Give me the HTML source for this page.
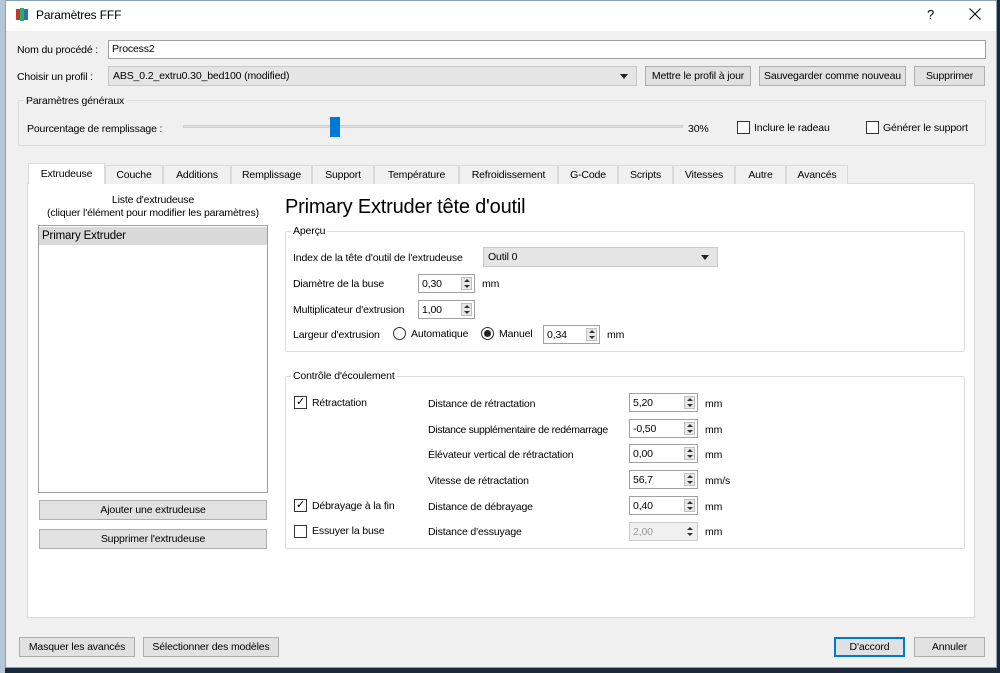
<!DOCTYPE html>
<html><head><meta charset="utf-8"><style>
*{box-sizing:border-box;margin:0;padding:0}
body{width:1000px;height:673px;position:relative;overflow:hidden;background:#1b2a3a;font-family:"Liberation Sans",sans-serif;font-size:10.5px;letter-spacing:-0.15px;color:#000}
.a{position:absolute;white-space:nowrap}
.win{position:absolute;left:5px;top:0;width:992px;height:668px;background:#f0f0f0;border:1px solid #8aa2b8}
.btn{position:absolute;background:#e1e1e1;border:1px solid #adadad;text-align:center;line-height:18px;height:20px;white-space:nowrap;overflow:hidden}
.inp{position:absolute;background:#fff;border:1px solid #a0a0a0;height:19px;line-height:17px;padding-left:3px}
.combo{position:absolute;background:#e5e5e5;border:1px solid #c8c8c8;height:20px;line-height:18px;padding-left:4px}
.combo:after{content:"";position:absolute;right:8px;top:7px;border-left:4px solid transparent;border-right:4px solid transparent;border-top:5px solid #222}
.grp{position:absolute;border:1px solid #dcdcdc;border-radius:2px}
.gt{position:absolute;background:#f0f0f0;padding:0 2px;line-height:12px}
.cb{position:absolute;width:13px;height:13px;border:1px solid #333;background:#fff}
.spin{position:absolute;background:#fff;border:1px solid #a0a0a0;height:19px;line-height:18px;padding-left:3px}
.spin i{position:absolute;right:2px;top:2px;width:11px;height:13px;background:#e8e8e8;border:1px solid #c0c0c0}
.spin i:before{content:"";position:absolute;left:2px;top:1px;border-left:3px solid transparent;border-right:3px solid transparent;border-bottom:3px solid #333}
.spin i:after{content:"";position:absolute;left:2px;top:7px;border-left:3px solid transparent;border-right:3px solid transparent;border-top:3px solid #333}
.tab{position:absolute;top:165px;height:19px;border:1px solid #d9d9d9;border-bottom:none;background:#f0f0f0;text-align:center;line-height:19px}
</style></head><body>
<div style="position:absolute;left:0;top:0;width:5px;height:673px;background:#b5c6d6"></div>
<div class="win">
<div style="position:absolute;left:0;top:0;width:990px;height:30px;background:#fff"></div>
</div>
<svg class="a" style="left:16px;top:8px" width="12" height="13"><rect x="0" y="1" width="4" height="11" fill="#c0392b"/><rect x="4" y="0" width="4" height="13" fill="#27ae60"/><rect x="8" y="1" width="4" height="11" fill="#2c6db5"/></svg>
<div class="a" style="left:36px;top:8px;font-size:12px">Paramètres FFF</div>
<div class="a" style="left:927px;top:7px;font-size:13px">?</div>
<svg class="a" style="left:969px;top:8px" width="12" height="12"><path d="M0.5 0.5L11.5 11.5M11.5 0.5L0.5 11.5" stroke="#111" stroke-width="1.2"/></svg>

<div class="a" style="left:17px;top:44px">Nom du procédé :</div>
<div class="inp" style="left:108px;top:40px;width:878px">Process2</div>
<div class="a" style="left:17px;top:71px">Choisir un profil :</div>
<div class="combo" style="left:108px;top:66px;width:529px">ABS_0.2_extru0.30_bed100 (modified)</div>
<div class="btn" style="left:645px;top:66px;width:106px">Mettre le profil à jour</div>
<div class="btn" style="left:759px;top:66px;width:147px">Sauvegarder comme nouveau</div>
<div class="btn" style="left:914px;top:66px;width:71px">Supprimer</div>

<div class="grp" style="left:18px;top:100px;width:968px;height:46px"></div>
<div class="gt" style="left:24px;top:95px">Paramètres généraux</div>
<div class="a" style="left:27px;top:123px">Pourcentage de remplissage :</div>
<div class="a" style="left:183px;top:125px;width:500px;height:3px;background:#ddd;border:1px solid #d0d0d0"></div>
<div class="a" style="left:330px;top:117px;width:10px;height:20px;background:#0078d7"></div>
<div class="a" style="left:688px;top:123px">30%</div>
<div class="cb" style="left:737px;top:121px"></div><div class="a" style="left:754px;top:122px">Inclure le radeau</div>
<div class="cb" style="left:866px;top:121px"></div><div class="a" style="left:883px;top:122px">Générer le support</div>

<div class="a" style="left:27px;top:183px;width:948px;height:435px;background:#fff;border:1px solid #d9d9d9"></div>
<div class="tab" style="left:28px;top:163px;width:77px;height:21px;background:#fff;line-height:20px">Extrudeuse</div>
<div class="tab" style="left:105px;width:58px">Couche</div>
<div class="tab" style="left:163px;width:68px">Additions</div>
<div class="tab" style="left:231px;width:81px">Remplissage</div>
<div class="tab" style="left:312px;width:62px">Support</div>
<div class="tab" style="left:374px;width:85px">Température</div>
<div class="tab" style="left:459px;width:99px">Refroidissement</div>
<div class="tab" style="left:558px;width:60px">G-Code</div>
<div class="tab" style="left:618px;width:55px">Scripts</div>
<div class="tab" style="left:673px;width:62px">Vitesses</div>
<div class="tab" style="left:735px;width:51px">Autre</div>
<div class="tab" style="left:786px;width:62px">Avancés</div>

<div class="a" style="left:38px;top:194px;width:230px;text-align:center;line-height:13px">Liste d'extrudeuse<br>(cliquer l'élément pour modifier les paramètres)</div>
<div class="a" style="left:38px;top:225px;width:230px;height:268px;border:1px solid #a0a0a0;background:#fff"></div>
<div class="a" style="left:39px;top:227px;width:228px;height:18px;background:#d9d9d9;padding-left:3px;line-height:18px;font-size:11.5px">Primary Extruder</div>
<div class="btn" style="left:39px;top:500px;width:228px">Ajouter une extrudeuse</div>
<div class="btn" style="left:39px;top:529px;width:228px">Supprimer l'extrudeuse</div>

<div class="a" style="left:285px;top:196px;font-size:20px;letter-spacing:-0.2px">Primary Extruder tête d'outil</div>

<div class="grp" style="left:285px;top:231px;width:680px;height:121px"></div>
<div class="gt" style="left:291px;top:225px;background:#fff">Aperçu</div>
<div class="a" style="left:293px;top:252px">Index de la tête d'outil de l'extrudeuse</div>
<div class="combo" style="left:483px;top:247px;width:235px">Outil 0</div>
<div class="a" style="left:293px;top:278px">Diamètre de la buse</div>
<div class="spin" style="left:418px;top:274px;width:57px">0,30<i></i></div>
<div class="a" style="left:482px;top:278px">mm</div>
<div class="a" style="left:293px;top:304px">Multiplicateur d'extrusion</div>
<div class="spin" style="left:418px;top:300px;width:57px">1,00<i></i></div>
<div class="a" style="left:293px;top:329px">Largeur d'extrusion</div>
<div class="a" style="left:393px;top:327px;width:13px;height:13px;border:1px solid #333;border-radius:50%"></div>
<div class="a" style="left:411px;top:328px">Automatique</div>
<div class="a" style="left:481px;top:327px;width:13px;height:13px;border:1px solid #333;border-radius:50%"><div style="margin:2px;width:7px;height:7px;border-radius:50%;background:#222"></div></div>
<div class="a" style="left:499px;top:328px">Manuel</div>
<div class="spin" style="left:543px;top:325px;width:57px">0,34<i></i></div>
<div class="a" style="left:607px;top:329px">mm</div>

<div class="grp" style="left:285px;top:376px;width:680px;height:173px"></div>
<div class="gt" style="left:291px;top:370px;background:#fff">Contrôle d'écoulement</div>
<div class="cb" style="left:294px;top:396px;font-size:11px;line-height:10px;text-align:center">✓</div><div class="a" style="left:312px;top:397px">Rétractation</div>
<div class="cb" style="left:294px;top:499px;font-size:11px;line-height:10px;text-align:center">✓</div><div class="a" style="left:312px;top:500px">Débrayage à la fin</div>
<div class="cb" style="left:294px;top:525px"></div><div class="a" style="left:312px;top:525px">Essuyer la buse</div>

<div class="a" style="left:428px;top:398px">Distance de rétractation</div>
<div class="spin" style="left:629px;top:393px;width:69px">5,20<i></i></div><div class="a" style="left:705px;top:398px">mm</div>
<div class="a" style="left:428px;top:424px;letter-spacing:-0.35px">Distance supplémentaire de redémarrage</div>
<div class="spin" style="left:629px;top:419px;width:69px">-0,50<i></i></div><div class="a" style="left:705px;top:424px">mm</div>
<div class="a" style="left:428px;top:449px">Élévateur vertical de rétractation</div>
<div class="spin" style="left:629px;top:444px;width:69px">0,00<i></i></div><div class="a" style="left:705px;top:449px">mm</div>
<div class="a" style="left:428px;top:475px">Vitesse de rétractation</div>
<div class="spin" style="left:629px;top:470px;width:69px">56,7<i></i></div><div class="a" style="left:705px;top:475px">mm/s</div>
<div class="a" style="left:428px;top:501px">Distance de débrayage</div>
<div class="spin" style="left:629px;top:496px;width:69px">0,40<i></i></div><div class="a" style="left:705px;top:501px">mm</div>
<div class="a" style="left:428px;top:526px">Distance d'essuyage</div>
<div class="spin" style="left:629px;top:522px;width:69px;background:#f0f0f0;border-color:#ccc;color:#999">2,00<i style="background:#f0f0f0;border-color:#f0f0f0"></i></div><div class="a" style="left:705px;top:526px">mm</div>

<div class="btn" style="left:19px;top:637px;width:116px">Masquer les avancés</div>
<div class="btn" style="left:143px;top:637px;width:136px">Sélectionner des modèles</div>
<div class="btn" style="left:834px;top:637px;width:71px;border:2px solid #0078d7;line-height:16px">D'accord</div>
<div class="btn" style="left:914px;top:637px;width:71px">Annuler</div>
</body></html>
